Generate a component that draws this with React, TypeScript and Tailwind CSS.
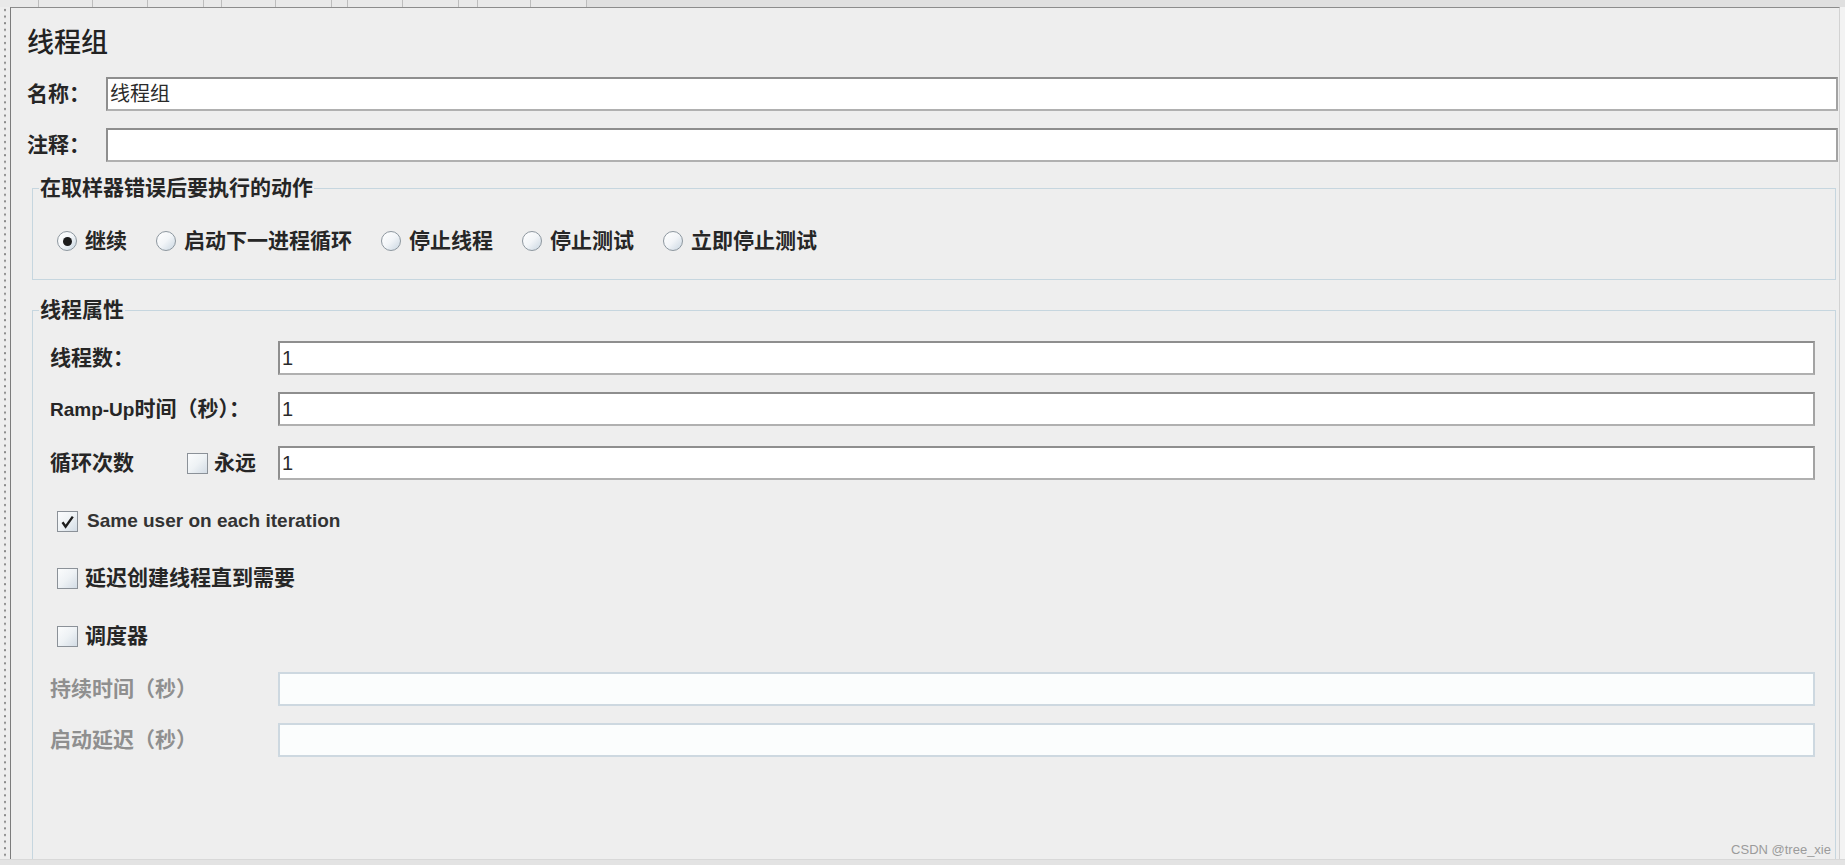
import React from "react";

function Radio({ checked, label }: { checked?: boolean; label: string }) {
  return (
    <div className="flex items-center h-[24px]">
      <span className="w-[20px] h-[20px] rounded-full border border-[#8d979f] bg-linear-to-br from-white via-[#f2f5f8] to-[#c9d6e1] flex items-center justify-center shrink-0">
        {checked && <span className="w-[9px] h-[9px] rounded-full bg-[#1c1c1c]" />}
      </span>
      <span className="ml-[8px] text-[21px] leading-[24px] font-bold text-[#262626]">{label}</span>
    </div>
  );
}

function Check({ checked }: { checked?: boolean }) {
  return (
    <span className="w-[21px] h-[21px] border border-[#8b9198] bg-linear-to-br from-[#fbfcfd] via-[#eef2f5] to-[#d3dce5] flex items-center justify-center shrink-0">
      {checked && (
        <svg width="15" height="15" viewBox="0 0 15 15">
          <path d="M2.5 8.2 L5.6 12.6 L12.8 2.6" fill="none" stroke="#1d1d1d" strokeWidth="2.4" strokeLinejoin="miter" />
        </svg>
      )}
    </span>
  );
}

function Field({ value, disabled }: { value?: string; disabled?: boolean }) {
  return (
    <div
      className={
        disabled
          ? "flex-1 h-full border-2 border-[#cdd8e0] bg-[#fbfdfd]"
          : "flex-1 h-full border-2 border-t-[#8e8e8e] border-l-[#8e8e8e] border-r-[#a3a3a3] border-b-[#b0b0b0] bg-white flex items-center pl-[2px] text-[20px] text-[#2a2a2a]"
      }
    >
      {value}
    </div>
  );
}

const tabs = [39, 54, 55, 56, 18, 54, 56, 16, 55, 56, 19, 53, 56];

export default function App() {
  return (
    <div className="w-[1845px] h-[865px] bg-[#e6e6e6] flex flex-col overflow-hidden relative font-['Liberation_Sans','Noto_Sans_CJK_SC',sans-serif] text-[#262626]">
      {/* top strip */}
      <div className="h-[7px] flex bg-[#e0e0e0] shrink-0">
        {tabs.map((w, i) => (
          <div key={i} style={{ width: w }} className="h-full border-r border-[#bdbdbd] bg-[#e9e9e9]" />
        ))}
      </div>

      <div className="flex h-[852px] shrink-0">
        {/* splitter */}
        <div className="w-[10px] h-full bg-[#eeeeee] shrink-0">
          <svg width="10" height="852">
            <defs>
              <pattern id="dots" width="10" height="6.6" patternUnits="userSpaceOnUse">
                <rect x="4" y="2" width="2" height="2" fill="#8a8a8a" />
              </pattern>
            </defs>
            <rect width="10" height="852" fill="url(#dots)" />
          </svg>
        </div>

        {/* main panel */}
        <div className="w-[1830px] h-full border-l border-t border-l-[#7c7c7c] border-t-[#8c8c8c] border-r border-r-[#d2d2d2] bg-[#eeeeee] flex flex-col overflow-hidden">
          <div className="mt-[19px] ml-[16px] text-[27px] leading-[32px] font-medium text-[#222]">线程组</div>

          <div className="mt-[18px] h-[34px] flex items-center pl-[16px] pr-[1px]">
            <div className="w-[79px] text-[21px] font-bold">名称：</div>
            <Field value="线程组" />
          </div>

          <div className="mt-[17px] h-[34px] flex items-center pl-[16px] pr-[1px]">
            <div className="w-[79px] text-[21px] font-bold">注释：</div>
            <Field value="" />
          </div>

          {/* group 1 */}
          <div className="mt-[26px] ml-[21px] mr-[3px] h-[92px] border border-[#c6d6df] shrink-0">
            <div className="-mt-[13px] ml-[6px] w-fit px-[1px] bg-[#eeeeee] text-[21px] leading-[24px] font-bold">
              在取样器错误后要执行的动作
            </div>
            <div className="mt-[29px] pl-[24px] flex items-center gap-[29px]">
              <Radio checked label="继续" />
              <Radio label="启动下一进程循环" />
              <Radio label="停止线程" />
              <Radio label="停止测试" />
              <Radio label="立即停止测试" />
            </div>
          </div>

          {/* group 2 */}
          <div className="mt-[30px] ml-[21px] mr-[3px] flex-1 border-t border-l border-r border-[#c6d6df] flex flex-col">
            <div className="-mt-[13px] ml-[6px] w-fit px-[1px] bg-[#eeeeee] text-[21px] leading-[24px] font-bold">线程属性</div>

            <div className="mt-[19px] h-[34px] flex items-center pl-[17px] pr-[20px]">
              <div className="w-[228px] text-[21px] font-bold">线程数：</div>
              <Field value="1" />
            </div>

            <div className="mt-[17px] h-[34px] flex items-center pl-[17px] pr-[20px]">
              <div className="w-[228px] text-[21px] font-bold">
                <span className="text-[19px]">Ramp-Up</span>时间（秒）：
              </div>
              <Field value="1" />
            </div>

            <div className="mt-[20px] h-[34px] flex items-center pl-[17px] pr-[20px]">
              <div className="w-[228px] flex items-center text-[21px] font-bold">
                <span className="w-[137px]">循环次数</span>
                <Check />
                <span className="ml-[6px]">永远</span>
              </div>
              <Field value="1" />
            </div>

            <div className="mt-[29px] h-[24px] flex items-center pl-[24px]">
              <Check checked />
              <span className="ml-[9px] text-[19px] font-bold text-[#333]">Same user on each iteration</span>
            </div>

            <div className="mt-[33px] h-[24px] flex items-center pl-[24px]">
              <Check />
              <span className="ml-[7px] text-[21px] font-bold">延迟创建线程直到需要</span>
            </div>

            <div className="mt-[34px] h-[24px] flex items-center pl-[24px]">
              <Check />
              <span className="ml-[7px] text-[21px] font-bold">调度器</span>
            </div>

            <div className="mt-[24px] h-[34px] flex items-center pl-[17px] pr-[20px]">
              <div className="w-[228px] text-[21px] font-bold text-[#8f8f8f]">持续时间（秒）</div>
              <Field disabled />
            </div>

            <div className="mt-[17px] h-[34px] flex items-center pl-[17px] pr-[20px]">
              <div className="w-[228px] text-[21px] font-bold text-[#8f8f8f]">启动延迟（秒）</div>
              <Field disabled />
            </div>
          </div>
        </div>

        <div className="flex-1 h-full bg-[#f3f3f3]" />
      </div>

      <div className="flex-1 bg-[#e3e3e3] border-t border-[#d8d8d8]" />

      <div className="absolute right-[14px] bottom-[8px] text-[13px] leading-[14px] text-[#9b9b9b]">CSDN @tree_xie</div>
    </div>
  );
}
